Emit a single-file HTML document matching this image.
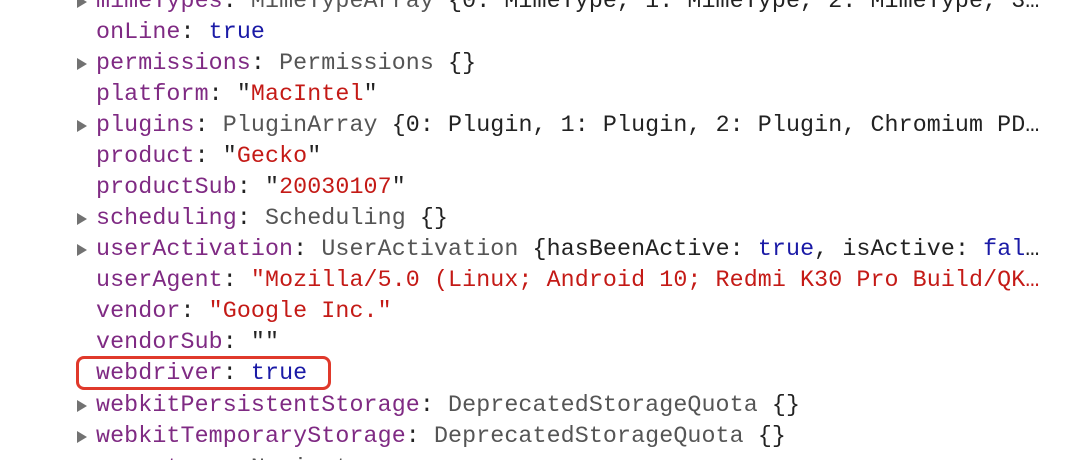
<!DOCTYPE html>
<html><head><meta charset="utf-8"><style>
html,body{margin:0;padding:0;background:#fff;width:1080px;height:460px;overflow:hidden}
.wrap{position:relative;width:1080px;height:460px;overflow:hidden}
.l{position:absolute;left:96px;font-family:"Liberation Mono",monospace;font-size:23.3px;line-height:31px;white-space:pre;color:#222;letter-spacing:0.1px}
.k{color:#7f2a83}.s{color:#c41a16}.b{color:#1a1aa6}.g{color:#555}
.t{position:absolute;left:-19px;top:10px;width:0;height:0;border-top:6px solid transparent;border-bottom:6px solid transparent;border-left:10px solid #727272}
.box{position:absolute;left:76px;top:356px;width:249px;height:28px;border:3px solid #e0392b;border-radius:8px}
</style></head><body><div class="wrap">
<div class="l" style="top:-14px"><span class="t"></span><span class="k">mimeTypes</span>: <span class="g">MimeTypeArray</span> {0: MimeType, 1: MimeType, 2: MimeType, 3…</div>
<div class="l" style="top:17px"><span class="k">onLine</span>: <span class="b">true</span></div>
<div class="l" style="top:48px"><span class="t"></span><span class="k">permissions</span>: <span class="g">Permissions</span> {}</div>
<div class="l" style="top:79px"><span class="k">platform</span>: "<span class="s">MacIntel</span>"</div>
<div class="l" style="top:110px"><span class="t"></span><span class="k">plugins</span>: <span class="g">PluginArray</span> {0: Plugin, 1: Plugin, 2: Plugin, Chromium PD…</div>
<div class="l" style="top:141px"><span class="k">product</span>: "<span class="s">Gecko</span>"</div>
<div class="l" style="top:172px"><span class="k">productSub</span>: "<span class="s">20030107</span>"</div>
<div class="l" style="top:203px"><span class="t"></span><span class="k">scheduling</span>: <span class="g">Scheduling</span> {}</div>
<div class="l" style="top:234px"><span class="t"></span><span class="k">userActivation</span>: <span class="g">UserActivation</span> {hasBeenActive: <span class="b">true</span>, isActive: <span class="b">fal</span>…</div>
<div class="l" style="top:265px"><span class="k">userAgent</span>: <span class="s">"Mozilla/5.0 (Linux; Android 10; Redmi K30 Pro Build/QK…</span></div>
<div class="l" style="top:296px"><span class="k">vendor</span>: <span class="s">"Google Inc."</span></div>
<div class="l" style="top:327px"><span class="k">vendorSub</span>: ""</div>
<div class="l" style="top:358px"><span class="k">webdriver</span>: <span class="b">true</span></div>
<div class="box"></div>
<div class="l" style="top:390px"><span class="t"></span><span class="k">webkitPersistentStorage</span>: <span class="g">DeprecatedStorageQuota</span> {}</div>
<div class="l" style="top:421px"><span class="t"></span><span class="k">webkitTemporaryStorage</span>: <span class="g">DeprecatedStorageQuota</span> {}</div>
<div class="l" style="top:453px;height:7px;overflow:hidden"><span class="k">__proto__</span>: <span class="g">Navigator</span></div>
</div></body></html>
